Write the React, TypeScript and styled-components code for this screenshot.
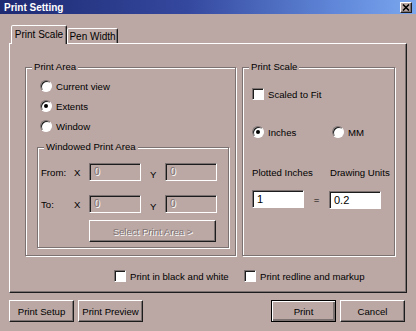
import React from 'react';
import styled, { createGlobalStyle, css } from 'styled-components';

const FACE = '#bba8a4';
const SHADOW = '#7d7272';
const DARK = '#1c1c1c';
const LIGHT = '#ffffff';

const GlobalStyle = createGlobalStyle`
  html, body {
    margin: 0;
    padding: 0;
    background: ${FACE};
  }
  body {
    font-family: "Liberation Sans", Arial, sans-serif;
    font-size: 9.6px;
    color: #000;
  }
`;

const raised = css`
  border: 1px solid;
  border-color: ${LIGHT} ${DARK} ${DARK} ${LIGHT};
  box-shadow: inset -1px -1px 0 ${SHADOW};
`;

const sunken = css`
  border: 1px solid;
  border-color: ${SHADOW} ${LIGHT} ${LIGHT} ${SHADOW};
  box-shadow: inset 1px 1px 0 ${DARK};
`;

const Dialog = styled.div`
  width: 416px;
  height: 331px;
  background: ${FACE};
  display: flex;
  flex-direction: column;
  overflow: hidden;
`;

const TitleBar = styled.div`
  height: 14px;
  display: flex;
  align-items: center;
  justify-content: space-between;
  padding: 0 4px;
  background: linear-gradient(to right, #1e2a72, #34489e 45%, #5f86d8 80%, #7aa6ee);
  color: ${LIGHT};
  font-weight: bold;
  font-size: 10px;
`;

const CloseBox = styled.div`
  width: 10px;
  height: 9px;
  ${raised};
  background: ${FACE};
  display: flex;
  align-items: center;
  justify-content: center;
`;

const Body = styled.div`
  padding: 11px 9px 0 9px;
  display: flex;
  flex-direction: column;
`;

const TabStrip = styled.div`
  display: flex;
  align-items: flex-end;
  padding-left: 2px;
  height: 18px;
  position: relative;
  z-index: 1;
`;

const Tab = styled.div<{ $active?: boolean; $w: number }>`
  width: ${p => p.$w}px;
  height: ${p => (p.$active ? 19 : 15)}px;
  box-sizing: border-box;
  border: 1px solid;
  border-bottom: none;
  border-color: ${LIGHT} ${DARK} transparent ${LIGHT};
  box-shadow: inset -1px 0 0 ${SHADOW};
  border-radius: 2px 2px 0 0;
  background: ${FACE};
  display: flex;
  align-items: ${p => (p.$active ? 'flex-start' : 'center')};
  justify-content: center;
  padding-top: ${p => (p.$active ? 3 : 0)}px;
  font-size: 10px;
  margin-bottom: ${p => (p.$active ? -1 : 0)}px;
`;

const Panel = styled.div`
  height: 250px;
  box-sizing: border-box;
  border: 1px solid;
  border-color: ${LIGHT} ${DARK} ${DARK} ${LIGHT};
  box-shadow: inset -1px -1px 0 ${SHADOW};
  padding: 23px 0 0 15px;
  display: flex;
  flex-direction: column;
`;

const Columns = styled.div`
  display: flex;
  gap: 6px;
`;

const Group = styled.div<{ $w: number; $h: number }>`
  position: relative;
  width: ${p => p.$w}px;
  height: ${p => p.$h}px;
  box-sizing: border-box;
  border: 1px solid ${SHADOW};
  box-shadow: 1px 1px 0 ${LIGHT}, inset 1px 1px 0 ${LIGHT};
  display: flex;
  flex-direction: column;
`;

const Caption = styled.span`
  position: absolute;
  top: -7px;
  left: 6px;
  padding: 0 2px;
  background: ${FACE};
  line-height: 12px;
  white-space: nowrap;
`;

const OptionRow = styled.label<{ $h?: number }>`
  display: flex;
  align-items: center;
  gap: 4px;
  height: ${p => p.$h ?? 20}px;
  white-space: nowrap;
`;

const RadioDot = styled.span<{ $on?: boolean }>`
  width: 12px;
  height: 12px;
  box-sizing: border-box;
  border-radius: 50%;
  ${sunken};
  background: ${LIGHT};
  display: flex;
  align-items: center;
  justify-content: center;
  &::after {
    content: '';
    width: 4px;
    height: 4px;
    border-radius: 50%;
    background: ${p => (p.$on ? '#000' : 'transparent')};
  }
`;

const CheckBox = styled.span`
  width: 12px;
  height: 12px;
  box-sizing: border-box;
  ${sunken};
  background: ${LIGHT};
`;

const AreaBody = styled.div`
  padding: 8px 0 0 14px;
  display: flex;
  flex-direction: column;
`;

const WindowedBody = styled.div`
  padding: 15px 0 0 3px;
  display: flex;
  flex-direction: column;
  gap: 14px;
`;

const CoordRow = styled.div`
  display: flex;
  align-items: center;
  height: 18px;
`;

const Cell = styled.span<{ $w: number; $pad?: number; $dy?: number }>`
  width: ${p => p.$w}px;
  padding-left: ${p => p.$pad ?? 0}px;
  box-sizing: border-box;
  position: relative;
  top: ${p => p.$dy ?? 0}px;
`;

const TextBox = styled.div<{ $disabled?: boolean; $w?: number }>`
  width: ${p => p.$w ?? 52}px;
  height: 18px;
  box-sizing: border-box;
  ${sunken};
  background: ${p => (p.$disabled ? FACE : LIGHT)};
  color: ${p => (p.$disabled ? SHADOW : '#000')};
  text-shadow: ${p => (p.$disabled ? `1px 1px 0 ${LIGHT}` : 'none')};
  padding: 2px 0 0 4px;
  font-size: ${p => (p.$disabled ? 10 : 11)}px;
`;

const Button = styled.div<{ $w: number; $h?: number; $default?: boolean; $disabled?: boolean }>`
  width: ${p => p.$w}px;
  height: ${p => p.$h ?? 22}px;
  box-sizing: border-box;
  ${raised};
  ${p => p.$default && css`
    outline: 1px solid #000;
    outline-offset: -1px;
    border-color: ${LIGHT} ${DARK} ${DARK} ${LIGHT};
    box-shadow: inset 1px 1px 0 ${LIGHT}, inset -2px -2px 0 ${SHADOW};
  `}
  background: ${FACE};
  display: flex;
  align-items: center;
  justify-content: center;
  color: ${p => (p.$disabled ? SHADOW : '#000')};
  text-shadow: ${p => (p.$disabled ? `1px 1px 0 ${LIGHT}` : 'none')};
  white-space: nowrap;
`;

const ScaleBody = styled.div`
  padding: 20px 0 0 9px;
  display: flex;
  flex-direction: column;
`;

const UnitsRow = styled.div`
  display: flex;
  margin-top: 26px;
`;

const LabelsRow = styled.div`
  display: flex;
  margin-top: 28px;
  height: 12px;
  align-items: center;
`;

const ValuesRow = styled.div`
  display: flex;
  align-items: flex-start;
  margin-top: 12px;
`;

const Equals = styled.span`
  width: 25px;
  text-align: center;
  padding-top: 4px;
`;

const PrintOptions = styled.div`
  display: flex;
  margin-top: 14px;
  padding-left: 89px;
`;

const Footer = styled.div`
  display: flex;
  justify-content: space-between;
  margin-top: 7px;
  padding-right: 2px;
`;

const ButtonGroup = styled.div`
  display: flex;
  gap: 4px;
`;

const Radio = ({ label, on, h }: { label: string; on?: boolean; h?: number }) => (
  <OptionRow $h={h}>
    <RadioDot $on={on} />
    <span>{label}</span>
  </OptionRow>
);

const Check = ({ label, w }: { label: string; w?: number }) => (
  <OptionRow $h={12} style={w ? { width: w } : undefined}>
    <CheckBox />
    <span>{label}</span>
  </OptionRow>
);

const CoordLine = ({ label }: { label: string }) => (
  <CoordRow>
    <Cell $w={33}>{label}</Cell>
    <Cell $w={15}>X</Cell>
    <TextBox $disabled>0</TextBox>
    <Cell $w={24} $pad={9} $dy={2}>Y</Cell>
    <TextBox $disabled>0</TextBox>
  </CoordRow>
);

export default function App() {
  return (
    <>
      <GlobalStyle />
      <Dialog>
        <TitleBar>
          <span>Print Setting</span>
          <CloseBox>
            <svg width="8" height="7" viewBox="0 0 8 7">
              <path d="M1 0.5 L7 6.5 M7 0.5 L1 6.5" stroke="#000" strokeWidth="1.6" />
            </svg>
          </CloseBox>
        </TitleBar>
        <Body>
          <TabStrip>
            <Tab $active $w={56}>Print Scale</Tab>
            <Tab $w={51}>Pen Width</Tab>
          </TabStrip>
          <Panel>
            <Columns>
              <Group $w={211} $h={189}>
                <Caption>Print Area</Caption>
                <AreaBody>
                  <Radio label="Current view" />
                  <Radio label="Extents" on />
                  <Radio label="Window" />
                  <Group $w={192} $h={101} style={{ marginTop: 11, marginLeft: -3 }}>
                    <Caption>Windowed Print Area</Caption>
                    <WindowedBody>
                      <CoordLine label="From:" />
                      <CoordLine label="To:" />
                    </WindowedBody>
                    <Button $w={127} $h={22} $disabled style={{ marginLeft: 51, marginTop: 7 }}>
                      Select Print Area &gt;
                    </Button>
                  </Group>
                </AreaBody>
              </Group>
              <Group $w={153} $h={189}>
                <Caption>Print Scale</Caption>
                <ScaleBody>
                  <Check label="Scaled to Fit" />
                  <UnitsRow>
                    <Cell $w={80}><Radio label="Inches" on h={12} /></Cell>
                    <Radio label="MM" h={12} />
                  </UnitsRow>
                  <LabelsRow>
                    <Cell $w={78}>Plotted Inches</Cell>
                    <span>Drawing Units</span>
                  </LabelsRow>
                  <ValuesRow>
                    <TextBox>1</TextBox>
                    <Equals>=</Equals>
                    <TextBox style={{ marginTop: 1 }}>0.2</TextBox>
                  </ValuesRow>
                </ScaleBody>
              </Group>
            </Columns>
            <PrintOptions>
              <Check label="Print in black and white" w={130} />
              <Check label="Print redline and markup" />
            </PrintOptions>
          </Panel>
          <Footer>
            <ButtonGroup>
              <Button $w={65}>Print Setup</Button>
              <Button $w={65}>Print Preview</Button>
            </ButtonGroup>
            <ButtonGroup>
              <Button $w={65} $default>Print</Button>
              <Button $w={65}>Cancel</Button>
            </ButtonGroup>
          </Footer>
        </Body>
      </Dialog>
    </>
  );
}
